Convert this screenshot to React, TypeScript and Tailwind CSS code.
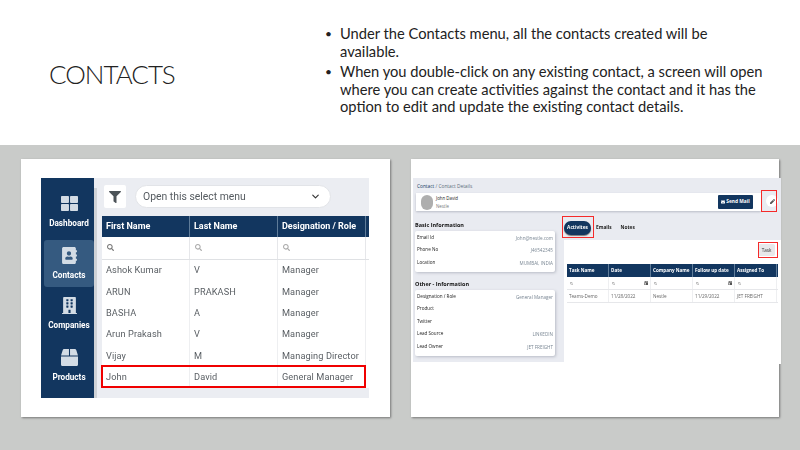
import { ChevronDown } from "lucide-react";
import {
  FaAddressBook,
  FaBox,
  FaBuilding,
  FaCalendarDay,
  FaEnvelope,
  FaFilter,
  FaPen,
  FaSearch,
  FaThLarge,
} from "react-icons/fa";
import type { IconType } from "react-icons";

const NAV: { label: string; icon: IconType; cls: string }[] = [
  { label: "Dashboard", icon: FaThLarge, cls: "" },
  { label: "Contacts", icon: FaAddressBook, cls: "mt-[5px] bg-[#355a80]" },
  { label: "Companies", icon: FaBuilding, cls: "mt-[2.5px]" },
  { label: "Products", icon: FaBox, cls: "mt-[5px]" },
];

const CONTACTS = [
  ["Ashok Kumar", "V", "Manager"],
  ["ARUN", "PRAKASH", "Manager"],
  ["BASHA", "A", "Manager"],
  ["Arun Prakash", "V", "Manager"],
  ["Vijay", "M", "Managing Director"],
  ["John", "David", "General Manager"],
];

const BASIC = [
  ["Email Id", "John@nestle.com"],
  ["Phone No", "J46542345"],
  ["Location", "MUMBAI, INDIA"],
];

const OTHER = [
  ["Designation / Role", "General Manager"],
  ["Product", ""],
  ["Twitter", ""],
  ["Lead Source", "LINKEDIN"],
  ["Lead Owner", "JET FREIGHT"],
];

const TASK_COLS = ["Task Name", "Date", "Company Name", "Follow up date", "Assigned To"];
const TASK_ROW = ["Teams-Demo", "11/28/2022", "Nestle", "11/29/2022", "JET FREIGHT"];

function ContactList() {
  return (
    <div className="relative">
      <div className="flex h-[220px] w-[328px] overflow-hidden bg-[#ebedf2] font-['Roboto',sans-serif] blur-[0.35px]">
        <nav className="flex w-[53px] shrink-0 flex-col bg-[#12365f] pt-[10px]">
          {NAV.map((n) => (
            <div key={n.label} className={`ml-[3px] flex h-[47px] w-[50px] flex-col items-center rounded-[3px] pt-[7px] ${n.cls}`}>
              <n.icon className="h-[17px] w-[17px] shrink-0 text-[#d3dce5]" />
              <span className="mt-[5px] text-[8.2px] font-bold leading-[12px] text-white">{n.label}</span>
            </div>
          ))}
        </nav>
        <div className="mt-[10px] w-[3px] shrink-0 bg-[#cfd2d6]" />
        <div className="flex min-w-0 flex-1 flex-col pl-[5px] pt-[7px]">
          <div className="flex h-[23px] items-center pl-[2px]">
            <div className="flex h-[23px] w-[22px] items-center justify-center rounded-[2px] bg-white">
              <FaFilter className="h-[12px] w-[12px] text-[#4c5358]" />
            </div>
            <div className="ml-[9px] flex h-[23px] w-[196px] items-center justify-between rounded-full border border-[#e2e4e8] bg-white pl-[7px] pr-[9px] text-[10.4px] text-[#555b60]">
              Open this select menu
              <ChevronDown className="h-[11px] w-[11px] text-[#333]" strokeWidth={2.5} />
            </div>
          </div>
          <div className="mt-[8px] flex h-[21px] bg-[#12365f] text-[9px] font-bold text-white">
            {["First Name", "Last Name", "Designation / Role"].map((h) => (
              <div key={h} className="flex w-[88px] shrink-0 items-center whitespace-nowrap border-r border-[#5f7c99] pl-[4px]">
                {h}
              </div>
            ))}
          </div>
          <div className="flex h-[22.5px] border-b border-[#dfe1e4] bg-white">
            {[0, 1, 2].map((i) => (
              <div key={i} className="flex w-[88px] shrink-0 items-center border-r border-[#e6e7ea] pl-[5px]">
                <FaSearch className={`h-[7px] w-[7px] ${i === 0 ? "text-[#777]" : "text-[#aaa]"}`} />
              </div>
            ))}
          </div>
          {CONTACTS.map((row) => (
            <div key={row[0]} className="flex h-[21.4px] bg-white text-[9.2px] tracking-[0.1px] text-[#5b6065]">
              {row.map((c, i) => (
                <div key={i} className="flex w-[88px] shrink-0 items-center border-r border-[#eeeff1] pl-[4px]">
                  {c}
                </div>
              ))}
            </div>
          ))}
        </div>
      </div>
      {/* highlight over the John David row */}
      <div className="absolute left-[60px] top-[187px] h-[23px] w-[265px] border-2 border-[#f00000]" />
    </div>
  );
}

function InfoCard({ rows, cls }: { rows: string[][]; cls: string }) {
  return (
    <div className={`mt-[2px] flex flex-col rounded-[2px] bg-white px-[2px] py-[2px] shadow-[1px_1px_3px_#b9bcc6] ${cls}`}>
      {rows.map(([k, v]) => (
        <div key={k} className="flex h-[9px] items-center justify-between text-[4.6px]">
          <span className="text-[#222]">{k}</span>
          <span className="pt-[2px] text-[#7a8794]">{v}</span>
        </div>
      ))}
    </div>
  );
}

function ContactDetails() {
  return (
    <div className="relative">
      <div className="h-[184px] w-[368px] bg-[#e9ebf1] pt-[5px] font-['Open_Sans',sans-serif] blur-[0.45px]">
        <div className="pl-[4px] text-[4.8px] leading-[7px] text-[#5d6b7a]">
          <span className="text-[#12365f]">Contact</span> / Contact Details
        </div>
        <div className="mt-[3px] flex items-start">
          <div className="ml-[3px] flex h-[18px] w-[345px] items-center bg-white shadow-[0_1px_2px_#b9bcc6]">
            <div className="ml-[5px] h-[15px] w-[12px] rounded-full bg-[#aeaeae]" />
            <div className="ml-[3px] flex flex-col text-[4.4px] leading-[8px]">
              <span className="text-[#222]">John David</span>
              <span className="text-[#777]">Nestle</span>
            </div>
            <div className="ml-auto mr-[8px] flex h-[14px] w-[35px] items-center justify-center gap-[1px] rounded-[1px] bg-[#12365f] text-[4.8px] font-bold text-white">
              <FaEnvelope className="h-[4px] w-[4px]" />
              Send Mail
            </div>
          </div>
          <div className="ml-[5px] mt-[2px] flex h-[12px] w-[12px] items-center justify-center rounded-full bg-white">
            <FaPen className="h-[5px] w-[5px] text-[#555]" />
          </div>
        </div>
        <div className="mt-[5px] flex">
          <div className="ml-[2px] w-[140px] pt-[5px]">
            <div className="text-[5.5px] font-bold leading-[8px] text-[#111]">Basic Information</div>
            <InfoCard rows={BASIC} cls="h-[41px] gap-[3.4px]" />
            <div className="mt-[8px] text-[5.5px] font-bold leading-[8px] text-[#111]">Other - Information</div>
            <InfoCard rows={OTHER} cls="h-[66px] gap-[3.4px]" />
          </div>
          <div className="ml-[9px] flex w-[217px] flex-col">
            <div className="flex h-[24px] items-center text-[4.8px] font-bold text-[#222]">
              <div className="flex h-[14px] w-[27px] items-center justify-center rounded-full bg-[#12365f] text-white shadow-[0_1px_1px_#777]">
                Activites
              </div>
              <span className="ml-[5px]">Emails</span>
              <span className="ml-[9px]">Notes</span>
            </div>
            <div className="flex h-[124px] flex-col bg-white px-[3px]">
              <div className="flex h-[20px] items-start justify-end pr-[3px] pt-[4px]">
                <div className="flex h-[12px] w-[17px] items-center justify-center rounded-[2px] bg-[#e8e8ea] text-[4.6px] text-[#333]">
                  Task
                </div>
              </div>
              <div className="mt-[4px] flex h-[13px] bg-[#12365f] text-[4.6px] font-bold text-white">
                {TASK_COLS.map((c) => (
                  <div key={c} className="flex w-[42px] items-center border-r border-[#5f7c99] pl-[2px]">
                    {c}
                  </div>
                ))}
              </div>
              <div className="flex h-[13px] border-b border-[#e6e7ea]">
                {TASK_COLS.map((c, i) => (
                  <div key={c} className="flex w-[42px] items-center justify-between border-r border-[#eeeff1] pl-[3px] pr-[2px]">
                    <FaSearch className="h-[3px] w-[3px] text-[#999]" />
                    {(i === 1 || i === 3) && <FaCalendarDay className="h-[4.5px] w-[4.5px] text-[#555]" />}
                  </div>
                ))}
              </div>
              <div className="flex h-[13px] border-b border-[#e6e7ea] text-[4.6px] text-[#666]">
                {TASK_ROW.map((c, i) => (
                  <div key={i} className="flex w-[42px] items-center border-r border-[#eeeff1] pl-[2px]">
                    {c}
                  </div>
                ))}
              </div>
            </div>
          </div>
        </div>
      </div>
      {/* red call-outs drawn over the screenshot */}
      <div className="absolute left-[348px] top-[12px] h-[22px] w-[16px] border-[1.5px] border-[#f52a2a]" />
      <div className="absolute left-[149px] top-[38px] h-[22px] w-[32px] border-[1.5px] border-[#f52a2a]" />
      <div className="absolute left-[345px] top-[64px] h-[16px] w-[20px] border-[1.5px] border-[#f52a2a]" />
    </div>
  );
}

export default function App() {
  return (
    <div className="flex h-[450px] w-[800px] flex-col overflow-hidden bg-white font-['Lato',sans-serif]">
      <header className="flex h-[145px] shrink-0">
        <h1 className="ml-[49px] mt-[56px] w-[276px] shrink-0 text-[26px] font-light leading-[36px] tracking-[-1px] text-[#222]">
          CONTACTS
        </h1>
        <ul className="mt-[25px] whitespace-nowrap text-[14.7px] leading-[17.5px] text-[#222]">
          <li className="flex">
            <span className="w-[15px] shrink-0 text-[12px]">•</span>
            <span>
              Under the Contacts menu, all the contacts created will be
              <br />
              available.
            </span>
          </li>
          <li className="mt-[3px] flex">
            <span className="w-[15px] shrink-0 text-[12px]">•</span>
            <span>
              When you double-click on any existing contact, a screen will open
              <br />
              where you can create activities against the contact and it has the
              <br />
              option to edit and update the existing contact details.
            </span>
          </li>
        </ul>
      </header>
      <main className="flex flex-1 bg-[#c9cbc9] pl-[21px] pt-[14px]">
        <section className="flex h-[258px] w-[369px] items-start bg-white pl-[20px] pt-[19px] shadow-[1px_1px_2px_#777]">
          <ContactList />
        </section>
        <section className="ml-[21px] flex h-[258px] w-[368px] items-start bg-white pl-[2px] pt-[19px] shadow-[1px_1px_2px_#777]">
          <ContactDetails />
        </section>
      </main>
    </div>
  );
}
